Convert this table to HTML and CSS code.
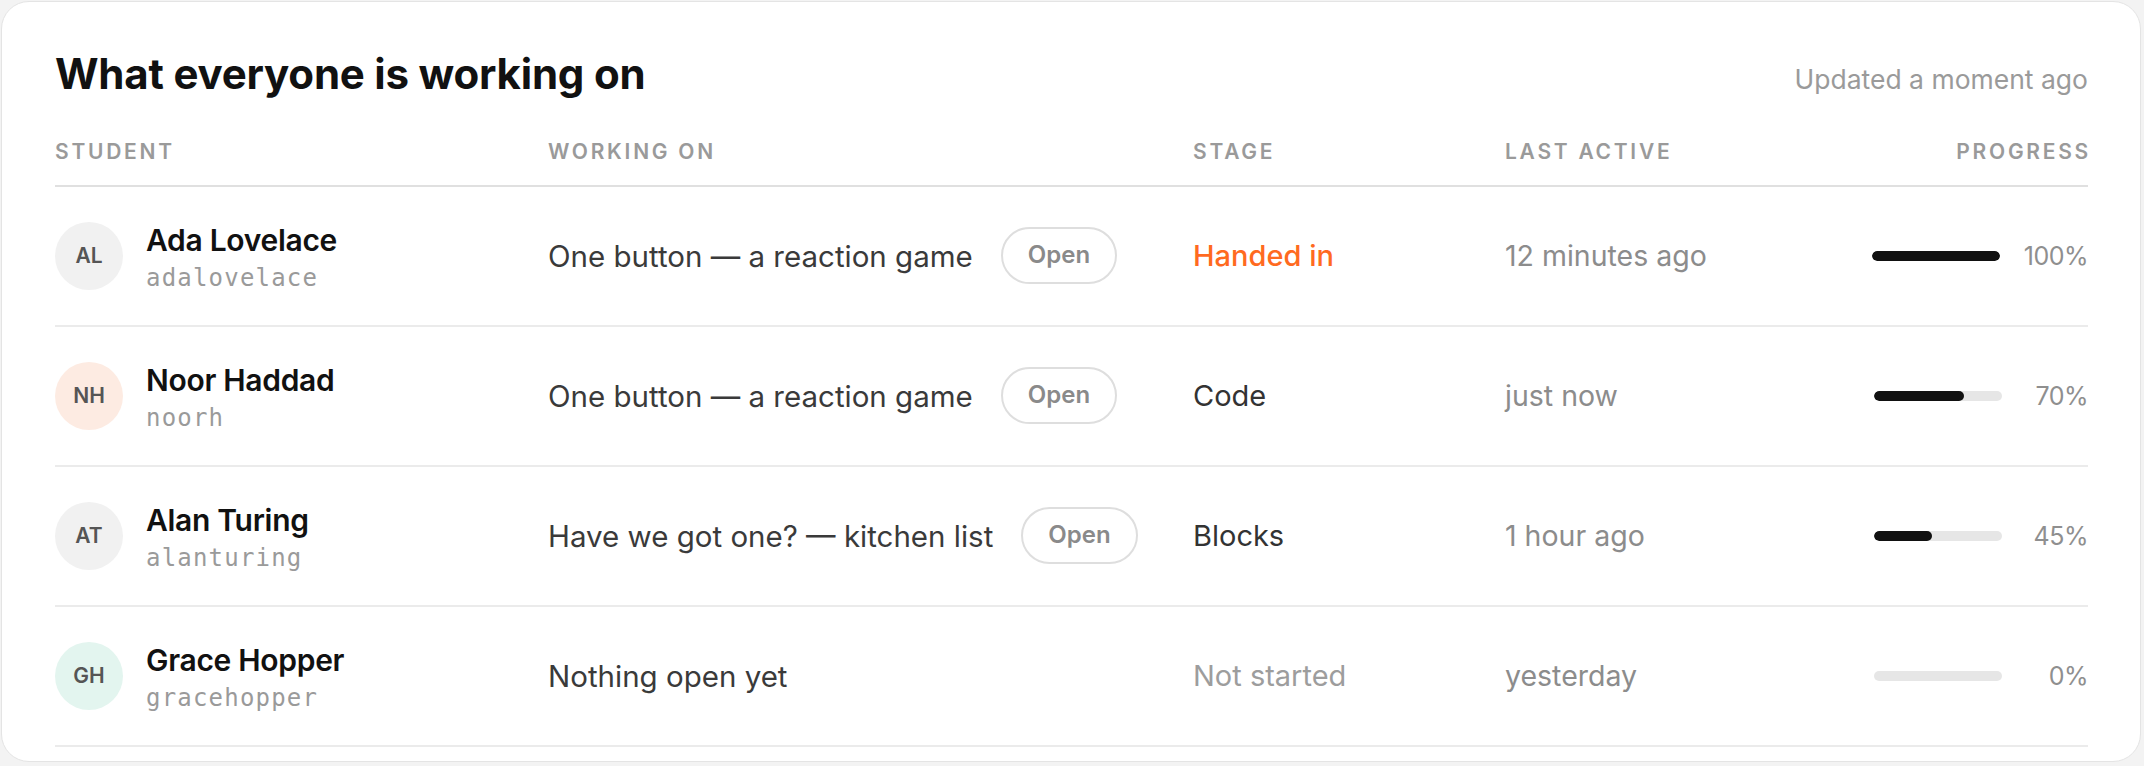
FILE: index.html
```html
<!DOCTYPE html>
<html lang="en">
<head>
<meta charset="utf-8">
<title>What everyone is working on</title>
<link rel="stylesheet" href="styles.css">
</head>
<body>
<section class="card">
  <header class="card-head">
    <h1 class="title">What everyone is working on</h1>
    <span class="updated">Updated a moment ago</span>
  </header>
  <div class="table">
    <div class="row head">
      <div class="th">Student</div>
      <div class="th">Working on</div>
      <div class="th">Stage</div>
      <div class="th">Last active</div>
      <div class="th th-right">Progress</div>
    </div>

    <div class="row">
      <div class="student">
        <span class="avatar av-grey">AL</span>
        <div class="who"><div class="name">Ada Lovelace</div><div class="user">adalovelace</div></div>
      </div>
      <div class="work"><span class="project">One button — a reaction game</span><button class="open">Open</button></div>
      <div class="stage stage-done">Handed in</div>
      <div class="active">12 minutes ago</div>
      <div class="progress"><span class="bar"><span class="fill" style="width:100%"></span></span><span class="pct">100%</span></div>
    </div>

    <div class="row">
      <div class="student">
        <span class="avatar av-peach">NH</span>
        <div class="who"><div class="name">Noor Haddad</div><div class="user">noorh</div></div>
      </div>
      <div class="work"><span class="project">One button — a reaction game</span><button class="open">Open</button></div>
      <div class="stage">Code</div>
      <div class="active">just now</div>
      <div class="progress"><span class="bar"><span class="fill" style="width:70%"></span></span><span class="pct">70%</span></div>
    </div>

    <div class="row">
      <div class="student">
        <span class="avatar av-grey">AT</span>
        <div class="who"><div class="name">Alan Turing</div><div class="user">alanturing</div></div>
      </div>
      <div class="work"><span class="project">Have we got one? — kitchen list</span><button class="open">Open</button></div>
      <div class="stage">Blocks</div>
      <div class="active">1 hour ago</div>
      <div class="progress"><span class="bar"><span class="fill" style="width:45%"></span></span><span class="pct">45%</span></div>
    </div>

    <div class="row">
      <div class="student">
        <span class="avatar av-mint">GH</span>
        <div class="who"><div class="name">Grace Hopper</div><div class="user">gracehopper</div></div>
      </div>
      <div class="work"><span class="project">Nothing open yet</span></div>
      <div class="stage stage-none">Not started</div>
      <div class="active">yesterday</div>
      <div class="progress"><span class="bar"><span class="fill" style="width:0%"></span></span><span class="pct">0%</span></div>
    </div>
  </div>
</section>
</body>
</html>
```

FILE: styles.css
```css
* { box-sizing: border-box; }

html, body {
  margin: 0;
  background: #f3f3f3;
}

body {
  padding: 1px 3px 3px 1px;
  font-family: Inter, "Noto Sans", "Liberation Sans", sans-serif;
  color: #222;
  white-space: nowrap;
}

.card {
  background: #fff;
  border: 1px solid #e4e4e4;
  border-radius: 28px;
  padding: 47px 52px 14px 53px;
}

.card-head {
  display: flex;
  justify-content: space-between;
  align-items: baseline;
}

.title {
  margin: 0;
  font-size: 42px;
  line-height: 1.2;
  font-weight: 700;
  letter-spacing: -0.005em;
  color: #111;
}

.updated {
  font-size: 26.5px;
  color: #9a9a9a;
}

.table {
  margin-top: 40px;
}

.row {
  display: grid;
  grid-template-columns: 493px 645px 312px 300px 1fr;
  align-items: center;
  height: 140px;
  border-bottom: 2px solid #ebebeb;
}

.row.head {
  height: auto;
  align-items: end;
  padding-bottom: 20px;
  border-bottom-color: #e0e0e0;
}

.th {
  font-size: 21px;
  line-height: 1.2;
  font-weight: 600;
  letter-spacing: 0.13em;
  text-transform: uppercase;
  color: #9a9a9a;
}

.th-right {
  text-align: right;
  margin-right: -3px;
}

.student {
  display: flex;
  align-items: center;
  gap: 23px;
}

.avatar {
  flex: none;
  width: 68px;
  height: 68px;
  border-radius: 50%;
  display: flex;
  align-items: center;
  justify-content: center;
  font-size: 21px;
  font-weight: 600;
  color: #555;
}

.av-grey { background: #f1f1f1; }
.av-peach { background: #fdebe2; }
.av-mint { background: #e3f5ef; }

.who {
  padding-top: 5px;
}

.name {
  font-size: 30px;
  line-height: 1.25;
  font-weight: 600;
  color: #111;
  letter-spacing: -0.01em;
}

.user {
  margin-top: 4px;
  font-family: "DejaVu Sans Mono", "Liberation Mono", monospace;
  font-size: 24px;
  line-height: 1.3;
  letter-spacing: 0.05em;
  color: #9a9a9a;
}

.work {
  display: flex;
  align-items: center;
  gap: 28px;
}

.project {
  font-size: 29.5px;
  color: #3a3a3a;
}

.open {
  font-family: inherit;
  font-size: 24px;
  font-weight: 600;
  color: #8a8a8a;
  background: #fff;
  border: 2px solid #dedede;
  border-radius: 999px;
  padding: 12px 25px;
  line-height: 1.2;
}

.stage {
  font-size: 29px;
  color: #333;
}

.stage-done {
  color: #ff6a1f;
  font-weight: 500;
}

.stage-none {
  color: #9d9d9d;
}

.active {
  font-size: 28.5px;
  color: #8c8c8c;
}

.progress {
  display: flex;
  align-items: center;
  justify-content: flex-end;
  gap: 24px;
}

.bar {
  flex: none;
  width: 128px;
  height: 10px;
  border-radius: 5px;
  background: #e6e6e6;
  overflow: hidden;
  display: block;
}

.fill {
  display: block;
  height: 100%;
  background: #111;
  border-radius: 5px;
}

.pct {
  min-width: 62px;
  text-align: right;
  font-size: 25px;
  letter-spacing: -0.02em;
  color: #8f8f8f;
}
```
